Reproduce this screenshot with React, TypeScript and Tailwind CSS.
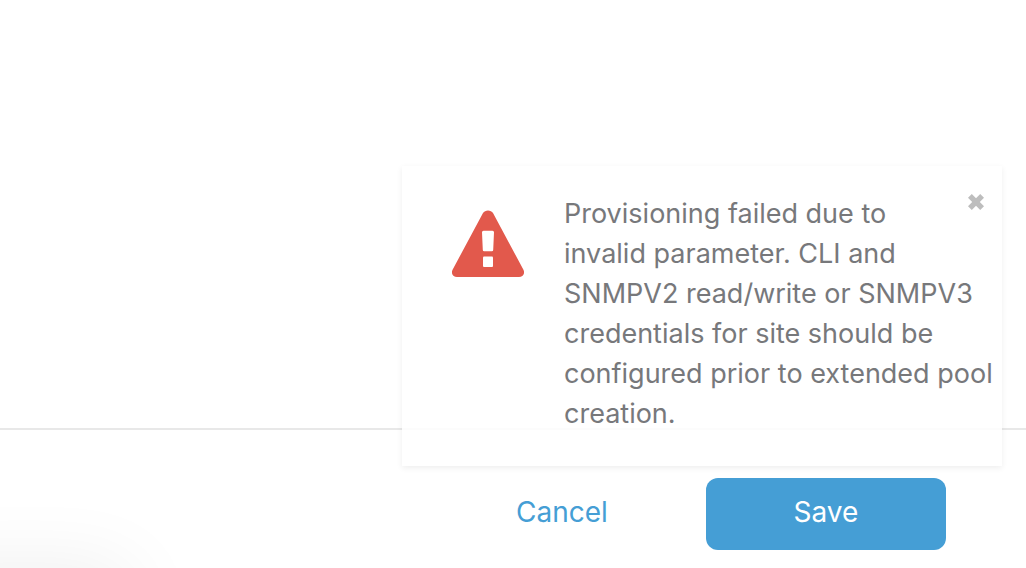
function WarningIcon() {
  return (
    <svg width="72" height="68" viewBox="0 0 72 68" aria-hidden="true">
      <path
        fill="#e2594c"
        d="M31 3C33 -0.5 39 -0.5 41 3L71.3 59.5C73.4 63.4 71 67 67 67H5C1 67 -1.4 63.4 0.7 59.5Z"
      />
      <path
        fill="#fff"
        d="M31.5 20.8H40.5Q42 20.8 42 22.3L41.2 40Q41.2 41.2 39.8 41.2H32.2Q30.8 41.2 30.8 40L30 22.3Q30 20.8 31.5 20.8Z"
      />
      <rect x="31" y="46.5" width="10" height="10.5" rx="1" fill="#fff" />
    </svg>
  );
}

function CloseIcon() {
  return (
    <svg width="16" height="16" viewBox="0 0 16 16" aria-hidden="true">
      <path
        fill="#bdbdbd"
        d="M3.8 0L8 4.2L12.2 0L16 3.8L11.8 8L16 12.2L12.2 16L8 11.8L3.8 16L0 12.2L4.2 8L0 3.8Z"
      />
    </svg>
  );
}

function Toast() {
  return (
    <div
      role="alert"
      className="absolute right-6 bottom-[102px] flex w-[600px] bg-white/85 pt-7 pb-8 pl-[50px] shadow-[0_2px_6px_rgba(0,0,0,0.07)]"
    >
      <div className="w-28 shrink-0 pt-4">
        <WarningIcon />
      </div>
      <p className="flex-1 text-[27px] leading-10 whitespace-nowrap text-[#77787b]">
        Provisioning failed due to
        <br />
        invalid parameter. CLI and
        <br />
        SNMPV2 read/write or SNMPV3
        <br />
        credentials for site should be
        <br />
        configured prior to extended pool
        <br />
        creation.
      </p>
      <button type="button" aria-label="Close" className="absolute top-7 right-[18px]">
        <CloseIcon />
      </button>
    </div>
  );
}

export default function App() {
  return (
    <div className="relative flex min-h-screen flex-col overflow-hidden bg-white font-['Inter','Liberation_Sans',sans-serif]">
      <main className="flex-1" />
      <footer className="flex justify-end gap-6 border-t-2 border-[#e8e8e8] pt-12 pr-20 pb-[18px]">
        <button type="button" className="h-[72px] w-60 pb-1 text-[28px] text-[#459ed5]">
          Cancel
        </button>
        <button
          type="button"
          className="h-[72px] w-60 rounded-xl bg-[#459ed5] pb-1 text-[28px] text-white"
        >
          Save
        </button>
      </footer>

      {/* Shadow cast by the panel below the fold */}
      <div className="absolute top-full -left-20 h-40 w-52 shadow-[0_0_80px_rgba(0,0,0,0.07)]" />

      <Toast />
    </div>
  );
}
